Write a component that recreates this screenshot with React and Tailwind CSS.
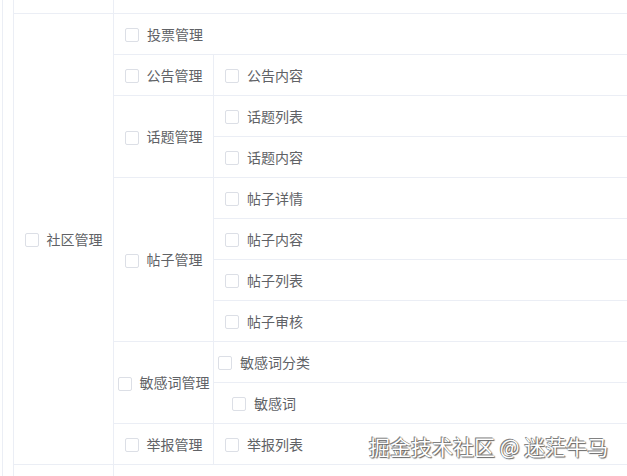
const GROUPS = [
  { name: '投票管理', items: [] },
  { name: '公告管理', items: ['公告内容'] },
  { name: '话题管理', items: ['话题列表', '话题内容'] },
  { name: '帖子管理', items: ['帖子详情', '帖子内容', '帖子列表', '帖子审核'] },
  { name: '敏感词管理', items: ['敏感词分类', '敏感词'] },
  { name: '举报管理', items: ['举报列表'] },
]

function Check({ label }) {
  return (
    <label className="flex items-center gap-2 whitespace-nowrap">
      <span className="w-[14px] h-[14px] rounded-[2px] border border-[#dcdfe6] bg-white shrink-0 mt-[2px]" />
      <span>{label}</span>
    </label>
  )
}

export default function App() {
  return (
    <div
      className="relative w-[627px] h-[476px] overflow-hidden bg-white text-[14px] text-[#606266]"
      style={{ fontFamily: '"Noto Sans CJK SC", "Noto Sans", sans-serif' }}
    >
      <div className="flex h-full pl-[2px]">
        {/* outer strip */}
        <div className="w-[11px] border-l border-[#ebeef5]" />

        {/* inner table */}
        <div className="flex-1 flex flex-col border-l border-[#ebeef5]">
          {/* previous row tail */}
          <div className="h-[14px] flex border-b border-[#ebeef5] shrink-0">
            <div className="w-[100px] border-r border-[#ebeef5]" />
          </div>

          {/* 社区管理 */}
          <div className="flex shrink-0">
            <div className="w-[100px] border-r border-b border-[#ebeef5] flex items-center justify-center">
              <Check label="社区管理" />
            </div>
            <div className="flex-1 flex flex-col">
              {GROUPS.map((g) =>
                g.items.length === 0 ? (
                  <div key={g.name} className="h-[41px] flex border-b border-[#ebeef5]">
                    <div className="w-[100px] flex items-center justify-center">
                      <Check label={g.name} />
                    </div>
                  </div>
                ) : (
                  <div key={g.name} className="flex">
                    <div className="w-[100px] border-r border-b border-[#ebeef5] flex items-center justify-center">
                      <Check label={g.name} />
                    </div>
                    <div className="flex-1 flex flex-col">
                      {g.items.map((it) => (
                        <div key={it} className="h-[41px] flex border-b border-[#ebeef5]">
                          <div className="w-[100px] flex items-center justify-center">
                            <Check label={it} />
                          </div>
                        </div>
                      ))}
                    </div>
                  </div>
                )
              )}
            </div>
          </div>

          {/* next row head */}
          <div className="flex-1 flex">
            <div className="w-[100px] border-r border-[#ebeef5]" />
          </div>
        </div>
      </div>

      {/* watermark */}
      <div className="absolute left-[369px] top-[432px] text-[21px] leading-[28px] text-white [text-shadow:0_0_1px_#555,1px_1px_1px_#666,-1px_-1px_0_#888]">
        掘金技术社区 @ 迷茫牛马
      </div>
    </div>
  )
}
